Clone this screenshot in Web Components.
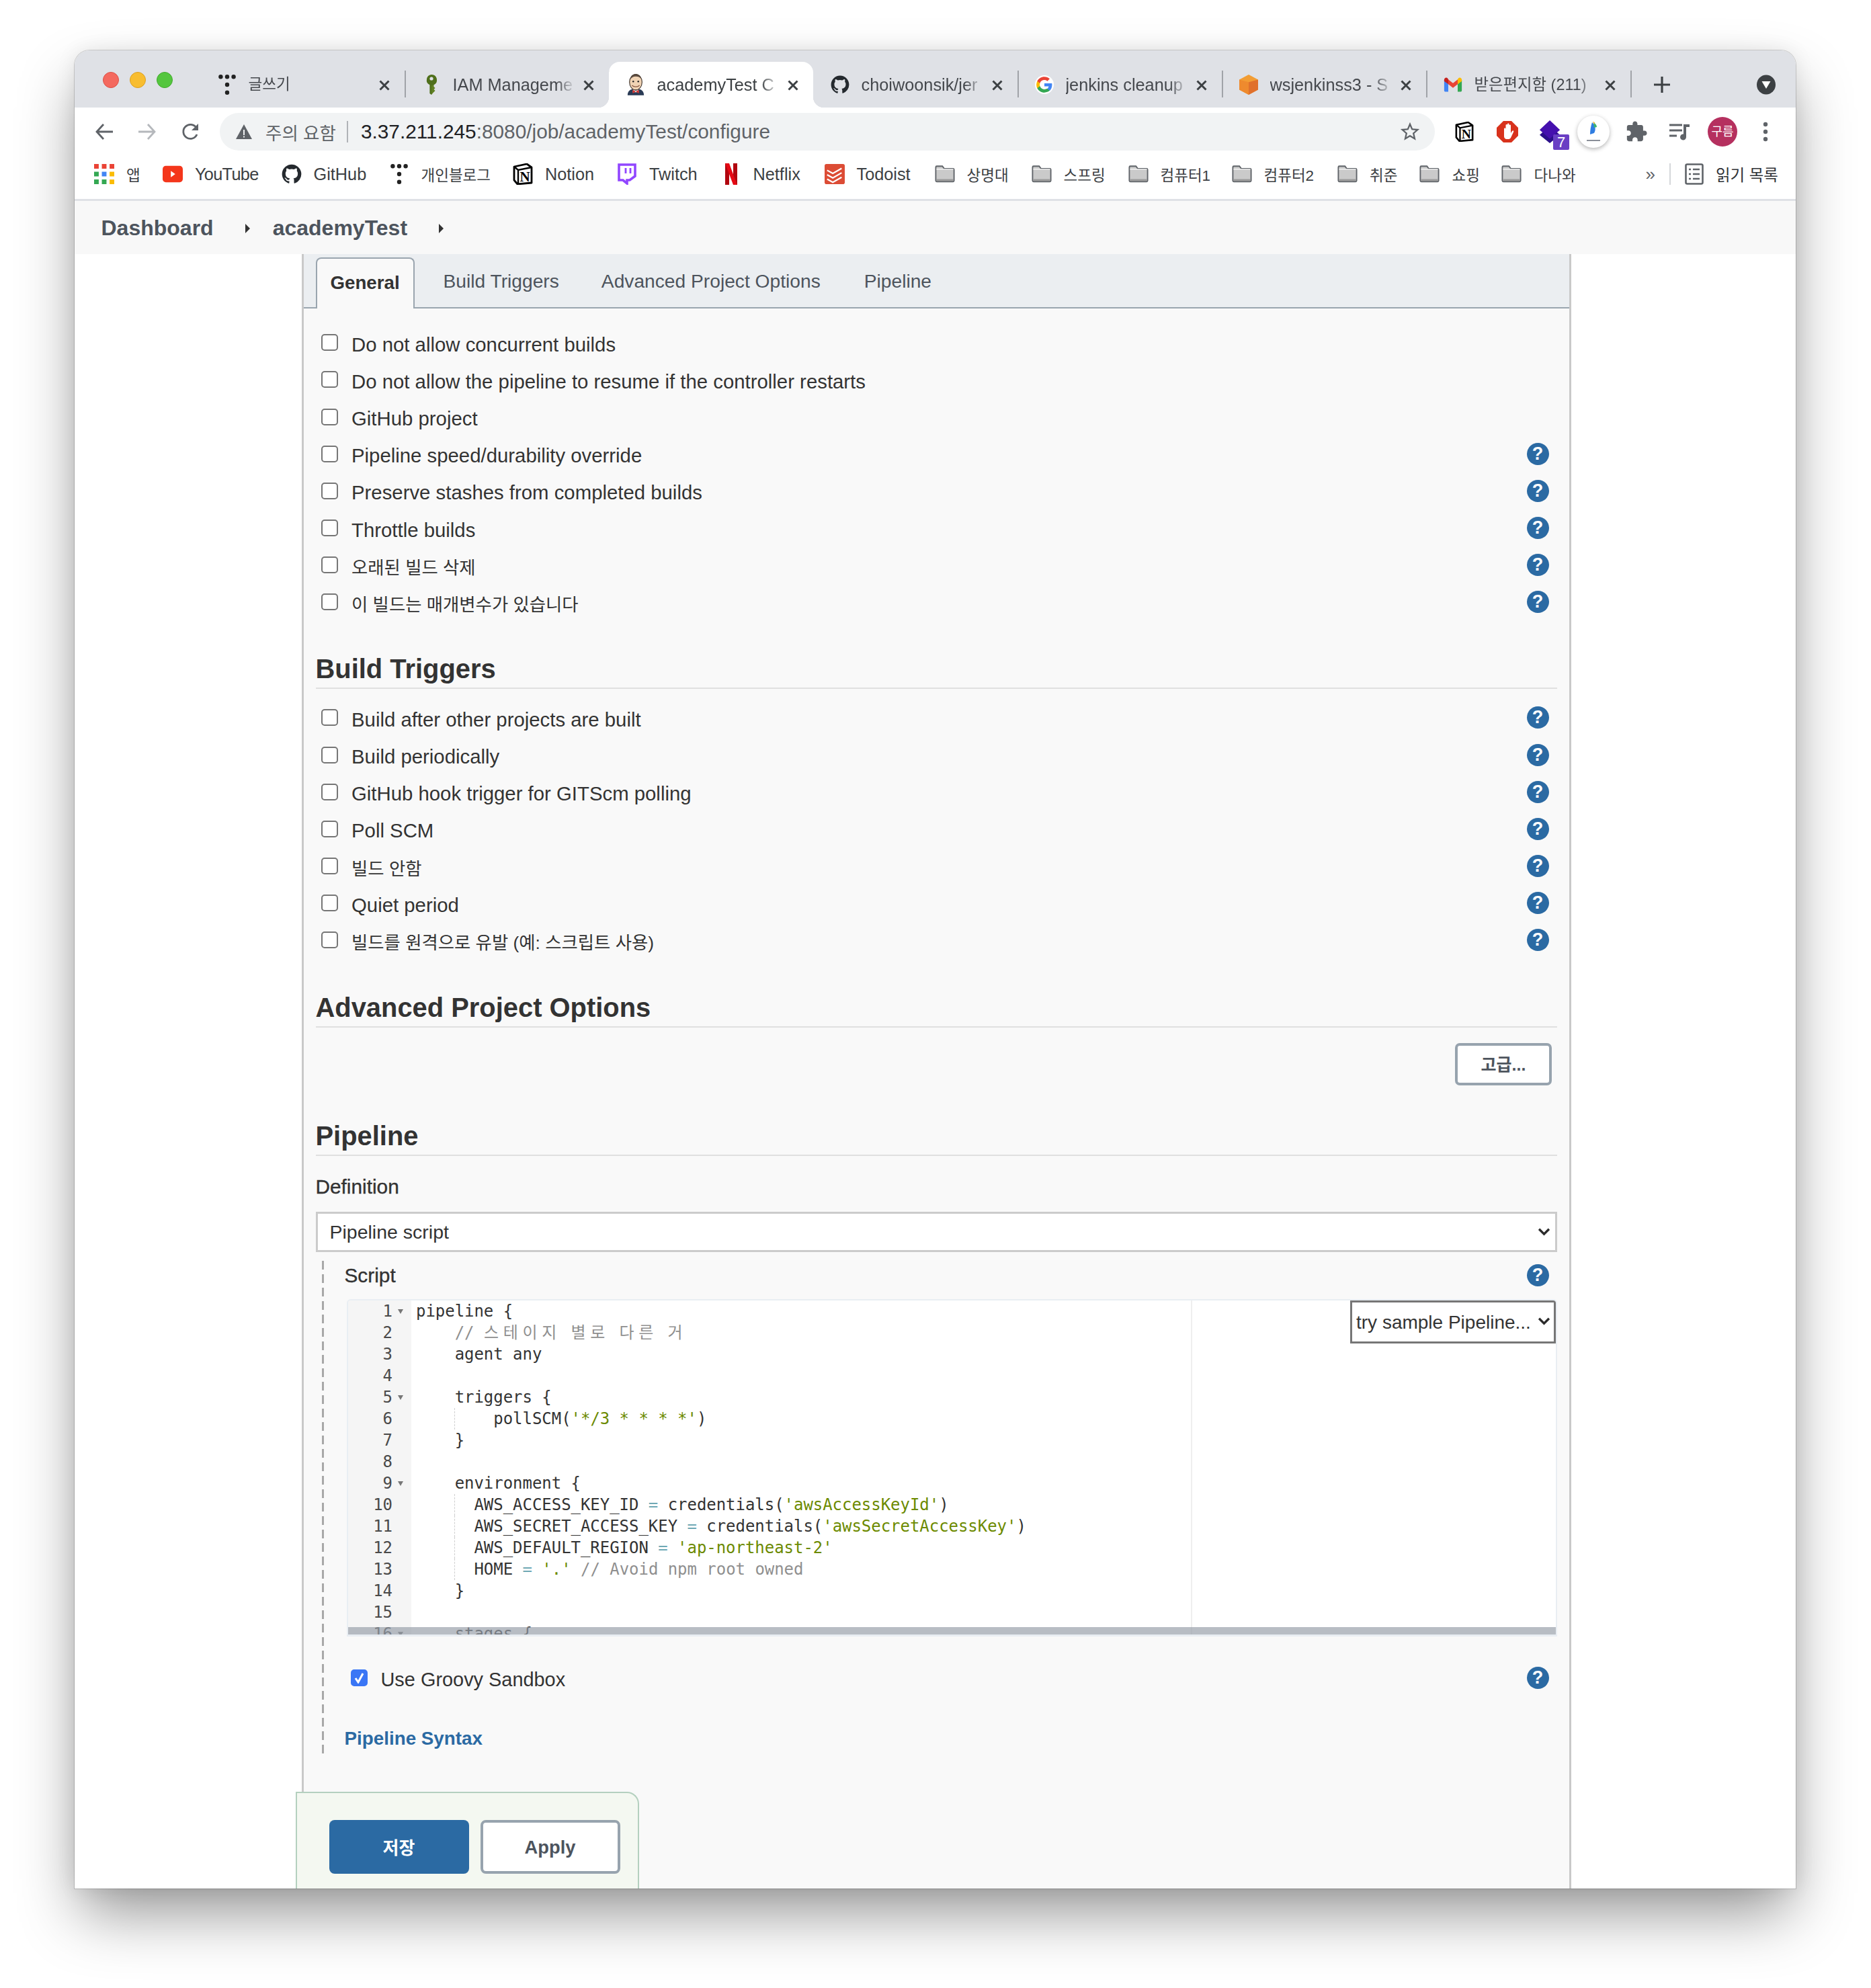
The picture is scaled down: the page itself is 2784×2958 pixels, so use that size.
<!DOCTYPE html>
<html lang="ko">
<head>
<meta charset="utf-8">
<title>academyTest Config</title>
<style>
  html, body { margin: 0; background: #fff; }
  body {
    padding: 75px 112px 148px 111px;
    font-family: "Liberation Sans", "Noto Sans CJK KR", sans-serif;
    color: #333;
  }
</style>
</head>
<body>
<app-window>
  <tab-strip slot="chrome">
    <chrome-tab icon="dots" style="font-size:22.5px">글쓰기</chrome-tab>
    <chrome-tab icon="key">IAM Manageme</chrome-tab>
    <chrome-tab icon="jenkins" active>academyTest C</chrome-tab>
    <chrome-tab icon="github">choiwoonsik/jer</chrome-tab>
    <chrome-tab icon="google">jenkins cleanup</chrome-tab>
    <chrome-tab icon="cube">wsjenkinss3 - S</chrome-tab>
    <chrome-tab icon="gmail" style="font-size:23.4px">받은편지함 (211)</chrome-tab>
  </tab-strip>
  <tool-bar slot="chrome"></tool-bar>
  <bookmark-bar slot="chrome">
    <bm-item icon="apps" w="102">앱</bm-item>
    <bm-item icon="youtube" w="176.5" style="letter-spacing:-.7px">YouTube</bm-item>
    <bm-item icon="github" w="160">GitHub</bm-item>
    <bm-item icon="dots" w="184.5">개인블로그</bm-item>
    <bm-item icon="notion" w="155">Notion</bm-item>
    <bm-item icon="twitch" w="154.5">Twitch</bm-item>
    <bm-item icon="netflix" w="154">Netflix</bm-item>
    <bm-item icon="todoist" w="164">Todoist</bm-item>
    <bm-item icon="folder" w="144">상명대</bm-item>
    <bm-item icon="folder" w="144">스프링</bm-item>
    <bm-item icon="folder" w="154">컴퓨터1</bm-item>
    <bm-item icon="folder" w="157.6">컴퓨터2</bm-item>
    <bm-item icon="folder" w="122.4">취준</bm-item>
    <bm-item icon="folder" w="122">쇼핑</bm-item>
    <bm-item icon="folder" w="110">다나와</bm-item>
  </bookmark-bar>
  <crumb-bar slot="chrome"></crumb-bar>

  <config-panel>
    <check-row>Do not allow concurrent builds</check-row>
    <check-row>Do not allow the pipeline to resume if the controller restarts</check-row>
    <check-row>GitHub project</check-row>
    <check-row help>Pipeline speed/durability override</check-row>
    <check-row help>Preserve stashes from completed builds</check-row>
    <check-row help>Throttle builds</check-row>
    <check-row help ko>오래된 빌드 삭제</check-row>
    <check-row help ko>이 빌드는 매개변수가 있습니다</check-row>

    <section-head style="margin-top:48.5px">Build Triggers</section-head>
    <check-row help style="margin-top:15.4px">Build after other projects are built</check-row>
    <check-row help>Build periodically</check-row>
    <check-row help>GitHub hook trigger for GITScm polling</check-row>
    <check-row help>Poll SCM</check-row>
    <check-row help ko>빌드 안함</check-row>
    <check-row help>Quiet period</check-row>
    <check-row help ko>빌드를 원격으로 유발 (예: 스크립트 사용)</check-row>

    <section-head style="margin-top:49.4px">Advanced Project Options</section-head>
    <plain-button style="margin:23px 8px 0 auto;width:144px;height:63px">고급...</plain-button>

    <section-head style="margin-top:52px">Pipeline</section-head>
    <field-label style="margin-top:29.5px">Definition</field-label>
    <wide-select style="margin-top:20px">Pipeline script</wide-select>

    <script-block>
      <code-editor></code-editor>
    </script-block>
    <save-bar></save-bar>
  </config-panel>
</app-window>

<script>
const ICONS = {
  dots: '<svg viewBox="0 0 26 30"><g fill="#222"><circle cx="4" cy="4" r="3"/><circle cx="13" cy="4" r="3"/><circle cx="22" cy="4" r="3"/><circle cx="13" cy="15" r="3"/><circle cx="13" cy="26" r="3"/></g></svg>',
  key: '<svg viewBox="0 0 20 32"><path fill="#5f7f22" d="M10 1a8 8 0 0 1 3.500 15.200V19l2 2-2 2 2 2-3 3-2.500 3-2.500-2V16.200A8 8 0 0 1 10 1z"/><path fill="#3f5f16" d="M10 1a8 8 0 0 1 0 16v14l-2.500-2V16.200A8 8 0 0 1 10 1z" opacity=".5"/><circle cx="10" cy="7" r="2.600" fill="#dfe1e6"/></svg>',
  jenkins: '<svg viewBox="0 0 30 34"><path fill="#2a3b55" d="M2 34c0-6 3-9 8-10l5 2 5-2c5 1 8 4 8 10z"/><path fill="#fff" d="M11 24l4 3 4-3 1 5H10z"/><ellipse cx="15" cy="13" rx="10" ry="12.500" fill="#f0d3b4" stroke="#3b3028" stroke-width="1.200"/><path fill="#5a4a3e" d="M6 9c1-6 5-9 9-9s8 3 9 8c-3-3-5-4-9-4s-7 2-9 5z"/><circle cx="11" cy="12" r="1.300" fill="#222"/><circle cx="19" cy="12" r="1.300" fill="#222"/><path fill="none" stroke="#8a5a44" stroke-width="1.400" d="M9 18c3 3 9 3 12 0"/><path fill="#d0312d" d="M10 25l5 3 5-3v6l-5-3-5 3z"/></svg>',
  github: '<svg viewBox="0 0 24 24"><path fill="#24292e" d="M12 .5C5.650.5.5 5.650.5 12c0 5.080 3.290 9.390 7.860 10.910.570.100.780-.250.780-.550v-2.140c-3.200.700-3.870-1.360-3.870-1.360-.520-1.330-1.270-1.680-1.270-1.680-1.040-.710.080-.700.080-.700 1.150.080 1.760 1.180 1.760 1.180 1.020 1.750 2.680 1.250 3.330.950.100-.740.400-1.250.730-1.540-2.550-.290-5.240-1.280-5.240-5.690 0-1.260.450-2.280 1.180-3.090-.120-.290-.510-1.460.110-3.050 0 0 .960-.310 3.150 1.180a10.900 10.900 0 0 1 5.740 0c2.190-1.490 3.150-1.180 3.150-1.180.620 1.590.230 2.760.110 3.050.740.810 1.180 1.830 1.180 3.090 0 4.420-2.690 5.390-5.250 5.680.410.360.780 1.060.780 2.140v3.170c0 .310.210.660.790.550A11.500 11.500 0 0 0 23.500 12C23.500 5.650 18.350.5 12 .5z"/></svg>',
  google: '<svg viewBox="4 4 24 24"><circle cx="16" cy="16" r="12" fill="#fff"/><path fill="#4285f4" d="M25.800 16.300c0-.700-.100-1.400-.200-2H16v3.900h5.500c-.200 1.300-1 2.400-2 3.100v2.500h3.300c1.900-1.800 3-4.400 3-7.500z"/><path fill="#34a853" d="M16 26c2.700 0 5-.900 6.800-2.400l-3.300-2.600c-.900.600-2.100 1-3.500 1-2.700 0-4.900-1.800-5.700-4.200H6.900v2.600C8.600 23.800 12 26 16 26z"/><path fill="#fbbc05" d="M10.300 17.800c-.400-1.200-.400-2.500 0-3.700v-2.600H6.900a10 10 0 0 0 0 8.900z"/><path fill="#ea4335" d="M16 10c1.500 0 2.800.500 3.900 1.500l2.900-2.900C21 7 18.700 6 16 6c-4 0-7.400 2.200-9.100 5.500l3.400 2.600c.800-2.400 3-4.100 5.700-4.100z"/></svg>',
  cube: '<svg viewBox="0 0 30 32"><path fill="#f29d34" d="M15 0l15 8v16l-15 8L0 24V8z"/><path fill="#e0702c" d="M15 12l15-4v16l-15 8z"/><path fill="#ee8a2e" d="M15 12L0 8v16l15 8z"/></svg>',
  gmail: '<svg viewBox="0 0 32 26"><path fill="#4285f4" d="M1 5v18c0 1 .800 2 2 2h5V12z"/><path fill="#34a853" d="M31 5v18c0 1-.800 2-2 2h-5V12z"/><path fill="#ea4335" d="M8 12V4l8 6.500L24 4v8l-8 6.500z"/><path fill="#c5221f" d="M1 5c0-3.500 3.500-5 6-3l1 2v8L1 7z"/><path fill="#fbbc04" d="M31 5c0-3.500-3.500-5-6-3l-1 2v8l7-5z"/></svg>',
  apps: '<svg viewBox="0 0 26 26"><path fill="#ea4335" d="M0 0h6v6H0zM10 0h6v6h-6zM20 0h6v6h-6z"/><path fill="#34a853" d="M0 10h6v6H0z"/><path fill="#4285f4" d="M10 10h6v6h-6z"/><path fill="#fbbc05" d="M20 10h6v6h-6z"/><path fill="#34a853" d="M0 20h6v6H0zM10 20h6v6h-6z"/><path fill="#fbbc05" d="M20 20h6v6h-6z"/></svg>',
  youtube: '<svg viewBox="0 0 32 26"><rect width="32" height="26" y="0" rx="5" fill="#f4361b"/><path fill="#fff" d="M13 8l7 5-7 5z"/></svg>',
  notion: '<svg viewBox="0 0 30 32"><path fill="#fff" stroke="#000" stroke-width="2.800" stroke-linejoin="round" d="M2 5l19-4 7 5v23l-21 2-5-6z"/><path fill="none" stroke="#000" stroke-width="2.400" d="M2 5l6 5 20-4M8 10v21"/><text x="18" y="27" font-family="Liberation Serif" font-weight="700" font-size="21" text-anchor="middle" fill="#000">N</text></svg>',
  twitch: '<svg viewBox="0 0 28 32"><path fill="#fff" stroke="#9146ff" stroke-width="3.600" d="M2 2h24v17l-8 6h-4v5l-6-5H2z"/><path stroke="#9146ff" stroke-width="2.800" d="M12 7v8M19 7v8"/></svg>',
  netflix: '<svg viewBox="0 0 20 32"><path fill="#b1060f" d="M1 0h6v32l-6 .500zM13 0h6v32.500l-6-.500z"/><path fill="#e50914" d="M1 0h6l12 32.500-6-.500z"/></svg>',
  todoist: '<svg viewBox="0 0 32 32"><rect width="32" height="32" rx="3" fill="#dc4c35"/><path fill="none" stroke="#fff" stroke-width="2.400" d="M4 10l9 5 14-8M4 17l9 5 14-8M4 24l9 5 14-8"/></svg>',
  folder: '<svg viewBox="0 0 32 28"><path fill="#cacaca" stroke="#5f6368" stroke-width="2" d="M1.500 3c0-1 .500-1.500 1.500-1.500h9l3 4h14c1 0 1.500.500 1.500 1.500v17.500c0 1-.500 1.500-1.500 1.500H3c-1 0-1.500-.500-1.500-1.500z"/><path fill="#fff" d="M2.500 5.500h27v1.500h-27z" opacity=".8"/><path fill="#9b9b9b" d="M2.500 22h27v3h-27z"/></svg>',
  list: '<svg viewBox="0 0 28 32"><rect x="1.500" y="1.500" width="25" height="29" rx="2" fill="none" stroke="#5f6368" stroke-width="2.600"/><path stroke="#5f6368" stroke-width="2.600" d="M6 9h3M12 9h10M6 16h3M12 16h10M6 23h3M12 23h10"/></svg>',
  back: '<svg viewBox="0 0 28 28"><path fill="none" stroke="#5f6368" stroke-width="2.800" d="M27 14H3M13 3L3 14l10 11"/></svg>',
  forward: '<svg viewBox="0 0 28 28"><path fill="none" stroke="#b5b8bc" stroke-width="2.800" d="M1 14h24M15 3l10 11-10 11"/></svg>',
  reload: '<svg viewBox="0 0 28 28"><path fill="none" stroke="#5f6368" stroke-width="2.800" d="M23 18a10.500 10.500 0 1 1-1-10"/><path fill="#5f6368" d="M25 2v10h-10z"/></svg>',
  warn: '<svg viewBox="0 0 26 26"><path fill="#5f6368" d="M13 2l12 22H1z"/><path fill="#f1f3f4" d="M12 10h2v8h-2zM12 19.500h2v2h-2z"/></svg>',
  star: '<svg viewBox="0 0 24 24"><path fill="#5f6368" d="M22 9.240l-7.190-.620L12 2 9.190 8.630 2 9.240l5.460 4.730L5.820 21 12 17.270 18.180 21l-1.630-7.030L22 9.240zM12 15.400l-3.760 2.270 1-4.280-3.320-2.880 4.380-.380L12 6.100l1.710 4.040 4.380.380-3.320 2.880 1 4.280L12 15.400z"/></svg>',
  adblock: '<svg viewBox="0 0 32 32"><path fill="#d8321c" d="M10 0h12l10 10v12L22 32H10L0 22V10z"/><path fill="#fff" d="M11 12c0-2 2.500-2 2.500 0V6.500c0-2 2.500-2 2.500 0V5c0-2 2.500-2 2.500 0v2c0-2 2.500-2 2.500 0v11l2-3c1.500-2 3 0 2 1.500L21 25c-1 1.500-2 2-4 2h-2c-2.500 0-4-2-4-4z"/></svg>',
  diamond: '<svg viewBox="0 0 36 36"><path fill="#2b0f8a" d="M17 9L33 23 17 36 1 23z"/><path fill="#4510ae" d="M17 0l16 15-16 14L1 15z"/></svg>',
  feather: '<svg viewBox="0 0 48 48"><circle cx="24" cy="24" r="23" fill="#fff"/><path fill="#2f7de1" d="M22 10c-2 6-3 12-3 18l6-2c3-5 2-12-3-16z"/><path fill="#3bb273" d="M24 10c3 2 5 4 5 7l-4 1z"/><path fill="#f3b32a" d="M23 9l3 1-1 3z"/><path fill="#8a8f98" d="M14 36h20v2H14z"/></svg>',
  puzzle: '<svg viewBox="0 0 24 24"><path fill="#5f6368" d="M20.500 11H19V7c0-1.100-.900-2-2-2h-4V3.500C13 2.120 11.880 1 10.500 1S8 2.120 8 3.500V5H4c-1.100 0-1.990.900-1.990 2v3.800H3.500c1.490 0 2.700 1.210 2.700 2.700s-1.210 2.700-2.700 2.700H2V20c0 1.100.900 2 2 2h3.800v-1.500c0-1.490 1.210-2.700 2.700-2.700 1.490 0 2.700 1.210 2.700 2.700V22H17c1.100 0 2-.900 2-2v-4h1.500c1.380 0 2.500-1.120 2.500-2.500S21.880 11 20.500 11z"/></svg>',
  media: '<svg viewBox="0 0 32 28"><path stroke="#5f6368" stroke-width="3" d="M1 4h19M1 12h19M1 20h11"/><path fill="#5f6368" d="M22 3h9v4h-5v15a4.500 4.500 0 1 1-4-4.500z"/></svg>',
  kebab: '<svg viewBox="0 0 8 30"><g fill="#5f6368"><circle cx="4" cy="4" r="3.200"/><circle cx="4" cy="15" r="3.200"/><circle cx="4" cy="26" r="3.200"/></g></svg>',
  plus: '<svg viewBox="0 0 26 26"><path stroke="#3c4043" stroke-width="3.200" d="M13 1v24M1 13h24"/></svg>',
  down: '<svg viewBox="0 0 28 30"><ellipse cx="14" cy="15" rx="14" ry="14.500" fill="#3c4043"/><path fill="#fff" d="M7.500 10h13L14 21z"/></svg>',
  close: '<svg viewBox="0 0 18 18"><path stroke="#3c4043" stroke-width="3" d="M2.500 2.500l13 13M15.500 2.500l-13 13"/></svg>',
  chevron: '<svg viewBox="0 0 20 14"><path fill="none" stroke="#2b2b2b" stroke-width="3.600" d="M2 3l8 8 8-8"/></svg>'
};

class UiIcon extends HTMLElement {
  connectedCallback() {
    this.attachShadow({ mode: "open" });
    const w = this.getAttribute("w") || 28;
    const h = this.getAttribute("h") || 28;
    this.shadowRoot.innerHTML = `
      <style>
        :host { display: inline-flex; flex: none; align-items: center; justify-content: center; width: ${w}px; height: ${h}px; }
        svg { width: 100%; height: 100%; display: block; }
      </style>
      ${ICONS[this.getAttribute("name")] || ""}`;
  }
}
customElements.define("ui-icon", UiIcon);

class AppWindow extends HTMLElement {
  constructor() {
    super();
    this.attachShadow({ mode: "open" });
    this.shadowRoot.innerHTML = `
      <style>
        :host {
          display: flex; flex-direction: column; height: 2735px; overflow: hidden;
          background: #fff; border-radius: 22px 22px 0 0;
          box-shadow: 0 44px 90px -8px rgba(0,0,0,.42), 0 0 0 1px rgba(0,0,0,.16), 0 0 30px rgba(0,0,0,.08);
        }
      </style>
      <slot name="chrome"></slot>
      <slot></slot>`;
  }
}
customElements.define("app-window", AppWindow);

class TabStrip extends HTMLElement {
  constructor() {
    super();
    this.attachShadow({ mode: "open" });
    this.shadowRoot.innerHTML = `
      <style>
        :host { display: flex; flex: none; height: 85px; box-sizing: border-box; background: #dfe1e6; padding: 17px 0 0 0; }
        .lights { display: flex; gap: 16px; width: 187px; box-sizing: border-box; padding: 15px 0 0 42px; }
        .lights i { width: 24px; height: 24px; border-radius: 50%; box-sizing: border-box; }
        .plus { margin: 21px 0 0 34px; }
        .down { margin: 19px 30px 0 auto; }
      </style>
      <div class="lights">
        <i style="background:#f4695f;border:1px solid #dd5047"></i>
        <i style="background:#f8bd30;border:1px solid #dc9f20"></i>
        <i style="background:#54c63e;border:1px solid #42a92d"></i>
      </div>
      <slot></slot>
      <ui-icon class="plus" name="plus" w="26" h="26"></ui-icon>
      <ui-icon class="down" name="down" w="28" h="30"></ui-icon>`;
  }
}
customElements.define("tab-strip", TabStrip);

class ChromeTab extends HTMLElement {
  constructor() {
    super();
    this.attachShadow({ mode: "open" });
  }
  connectedCallback() {
    const icon = this.getAttribute("icon");
    this.shadowRoot.innerHTML = `
      <style>
        :host {
          display: flex; flex: none; align-items: center; position: relative;
          width: 304px; height: 68px; box-sizing: border-box; padding-left: 26px;
          font-size: 25.3px; color: #45484d;
        }
        :host([active]) { background: #fff; border-radius: 16px 16px 0 0; color: #3c4043; }
        :host([active]) .sep { visibility: hidden; }
        :host([active])::before, :host([active])::after {
          content: ""; position: absolute; bottom: 0; width: 16px; height: 16px;
        }
        :host([active])::before { left: -16px; background: radial-gradient(circle at 0 0, transparent 16px, #fff 16.5px); }
        :host([active])::after { right: -16px; background: radial-gradient(circle at 100% 0, transparent 16px, #fff 16.5px); }
        .title {
          width: 188px; margin-left: 17.5px; white-space: nowrap; overflow: hidden; line-height: 34px;
          -webkit-mask-image: linear-gradient(90deg, #000 calc(100% - 34px), transparent calc(100% - 6px));
        }
        .x { margin: 2px 5px 0 5px; }
        .sep { width: 2px; height: 40px; background: #a0a3a8; margin: -2px -2px 0 auto; }
      </style>
      <ui-icon name="${icon}" w="28" h="32"></ui-icon>
      <span class="title"><slot></slot></span>
      <ui-icon class="x" name="close" w="18" h="18"></ui-icon>
      <span class="sep"></span>`;
  }
}
customElements.define("chrome-tab", ChromeTab);

class ToolBar extends HTMLElement {
  constructor() {
    super();
    this.attachShadow({ mode: "open" });
    this.shadowRoot.innerHTML = `
      <style>
        :host { display: flex; flex: none; align-items: center; height: 68px; box-sizing: border-box; padding: 8px 0 0 11.5px; background: #fff; }
        .btn { display: flex; align-items: center; justify-content: center; width: 64.5px; flex: none; }
        .addr {
          display: flex; align-items: center; flex: none; width: 1808px; height: 56px; margin-left: 11px; margin-bottom: 4px;
          box-sizing: border-box; padding: 0 20px 0 23px; border-radius: 28px; background: #f1f3f4;
        }
        .warn-text { margin-left: 19px; font-size: 26.5px; color: #5f6368; white-space: nowrap; }
        .bar { width: 2px; height: 32px; background: #b0b3b7; margin: 0 19px 0 16px; }
        .url { font-size: 29.8px; color: #5f6368; white-space: nowrap; }
        .url b { font-weight: 400; color: #202124; }
        .star { margin-left: auto; }
        .exts { display: flex; margin-left: 12px; margin-bottom: 4px; }
        .exts .btn { width: 64px; position: relative; height: 56px; }
        .badge {
          position: absolute; left: 36px; top: 32px; width: 24px; height: 23px; border-radius: 2px;
          background: #6a3fc4; color: #fff; font-size: 22px; line-height: 24px; text-align: center;
        }
        .feather { border-radius: 50%; box-shadow: 0 2px 6px rgba(0,0,0,.3); }
        .avatar {
          width: 44px; height: 44px; border-radius: 50%; background: #b5305f; color: #fff;
          font-size: 18px; line-height: 44px; text-align: center;
        }
      </style>
      <span class="btn" style="margin-bottom:4px"><ui-icon name="back" w="28" h="28"></ui-icon></span>
      <span class="btn" style="margin-bottom:4px"><ui-icon name="forward" w="28" h="28"></ui-icon></span>
      <span class="btn" style="margin-bottom:4px"><ui-icon name="reload" w="28" h="28"></ui-icon></span>
      <div class="addr">
        <ui-icon name="warn" w="26" h="28"></ui-icon>
        <span class="warn-text">주의 요함</span>
        <span class="bar"></span>
        <span class="url"><b>3.37.211.245</b>:8080/job/academyTest/configure</span>
        <ui-icon class="star" name="star" w="34" h="34"></ui-icon>
      </div>
      <div class="exts">
        <span class="btn"><ui-icon name="notion" w="28" h="30"></ui-icon></span>
        <span class="btn"><ui-icon name="adblock" w="32" h="32"></ui-icon></span>
        <span class="btn"><ui-icon name="diamond" w="34" h="34"></ui-icon><span class="badge">7</span></span>
        <span class="btn"><ui-icon class="feather" name="feather" w="48" h="48"></ui-icon></span>
        <span class="btn"><ui-icon name="puzzle" w="34" h="34"></ui-icon></span>
        <span class="btn"><ui-icon name="media" w="32" h="28"></ui-icon></span>
        <span class="btn"><span class="avatar">구름</span></span>
        <span class="btn"><ui-icon name="kebab" w="8" h="30"></ui-icon></span>
      </div>`;
  }
}
customElements.define("tool-bar", ToolBar);

class BookmarkBar extends HTMLElement {
  constructor() {
    super();
    this.attachShadow({ mode: "open" });
    this.shadowRoot.innerHTML = `
      <style>
        :host {
          display: flex; flex: none; align-items: center; height: 71px; box-sizing: border-box;
          padding: 0 26px 6px 29px; background: #fff; border-bottom: 3px solid #dfe1e6;
          font-size: 25.3px; color: #3c4043;
        }
        .more { margin-left: auto; font-size: 26px; color: #5f6368; }
        .sep { width: 2px; height: 32px; background: #d5d7da; margin: 0 21px 0 21px; }
        .read { margin-left: 18px; font-size: 23.5px; color: #2f3236; white-space: nowrap; }
      </style>
      <slot></slot>
      <span class="more">»</span>
      <span class="sep"></span>
      <ui-icon name="list" w="28" h="32"></ui-icon>
      <span class="read">읽기 목록</span>`;
  }
}
customElements.define("bookmark-bar", BookmarkBar);

class BmItem extends HTMLElement {
  constructor() {
    super();
    this.attachShadow({ mode: "open" });
  }
  connectedCallback() {
    this.shadowRoot.innerHTML = `
      <style>
        :host { display: flex; flex: none; align-items: center; width: ${this.getAttribute("w")}px; white-space: nowrap; }
        .t { margin-left: 18px; }
        .k { font-size: 22.5px; }
      </style>
      <ui-icon name="${this.getAttribute("icon")}" w="30" h="32"></ui-icon>
      <span class="t ${/[가-힣]/.test(this.textContent) ? "k" : ""}"><slot></slot></span>`;
  }
}
customElements.define("bm-item", BmItem);

class CrumbBar extends HTMLElement {
  constructor() {
    super();
    this.attachShadow({ mode: "open" });
    this.shadowRoot.innerHTML = `
      <style>
        :host {
          display: flex; flex: none; align-items: center; height: 79px; box-sizing: border-box; padding: 2px 0 0 39.5px;
          background: #f8f8f8; font-size: 32px; font-weight: 700; color: #4d545d;
        }
        i { width: 0; height: 0; border-left: 7px solid #333; border-top: 7px solid transparent; border-bottom: 7px solid transparent; }
      </style>
      <span>Dashboard</span>
      <i style="margin:0 34px 0 47px"></i>
      <span>academyTest</span>
      <i style="margin-left:47px"></i>`;
  }
}
customElements.define("crumb-bar", CrumbBar);

class ConfigPanel extends HTMLElement {
  constructor() {
    super();
    this.attachShadow({ mode: "open" });
    this.shadowRoot.innerHTML = `
      <style>
        :host { display: block; flex: 1; min-height: 0; margin: 0 334px 0 337.5px; background: #f9f9f9; border: solid #c9c9c9; border-width: 0 3px; }
        .tabs {
          display: flex; align-items: flex-end; height: 81px; box-sizing: border-box; padding-left: 18px;
          background: #ebeef1; border-bottom: 2px solid #9aa5af; font-size: 28.2px; color: #4d545d;
        }
        .tabs span { padding-bottom: 22px; white-space: nowrap; }
        .tabs .on {
          width: 147px; height: 76px; margin-bottom: -2px; box-sizing: border-box; padding: 20px 0 0 20px;
          background: #f9f9f9; border: 2px solid #9aa5af; border-bottom: 0; border-radius: 8px 8px 0 0;
          font-weight: 700; color: #333; font-size: 27.7px;
        }
        .body { display: flex; flex-direction: column; padding: 23.2px 18px 0 18px; }
      </style>
      <div class="tabs">
        <span class="on">General</span>
        <span style="margin-left:43px">Build Triggers</span>
        <span style="margin-left:63px">Advanced Project Options</span>
        <span style="margin-left:65px">Pipeline</span>
      </div>
      <div class="body"><slot></slot></div>`;
  }
}
customElements.define("config-panel", ConfigPanel);

class HelpIcon extends HTMLElement {
  constructor() {
    super();
    this.attachShadow({ mode: "open" });
    this.shadowRoot.innerHTML = `
      <style>
        :host {
          display: block; flex: none; width: 33px; height: 33px; border-radius: 50%; background: #2b6aa3;
          color: #fff; font: 700 27px/33px "Liberation Sans", sans-serif; text-align: center;
        }
      </style>?`;
  }
}
customElements.define("help-icon", HelpIcon);

class CheckRow extends HTMLElement {
  constructor() {
    super();
    this.attachShadow({ mode: "open" });
  }
  connectedCallback() {
    const on = this.hasAttribute("checked");
    this.shadowRoot.innerHTML = `
      <style>
        :host { display: flex; flex: none; align-items: center; height: 55.17px; padding: 0 12.5px 0 8.5px; font-size: 29.35px; color: #333; }
        :host([ko]) .label { font-size: 26.4px; padding-top: 4px; }
        :host([checked]) .box { background: #3a76f5; border-color: #3a76f5; }
        .box {
          position: relative; appearance: none; flex: none; width: 25px; height: 25px; margin: 0; box-sizing: border-box;
          background: #fff; border: 2px solid #767676; border-radius: 5px;
        }
        .wrap { position: relative; display: flex; flex: none; }
        .tick { position: absolute; left: 4px; top: 4px; width: 17px; height: 17px; }
        .label { margin-left: 20px; padding-top: 6px; white-space: nowrap; }
        help-icon { margin-left: auto; }
      </style>
      <span class="wrap">
        <input class="box" type="checkbox" ${on ? "checked" : ""}>
        ${on ? '<svg class="tick" viewBox="0 0 17 17"><path fill="none" stroke="#fff" stroke-width="3" d="M3 9l4 6 7-13"/></svg>' : ""}
      </span>
      <span class="label"><slot></slot></span>
      ${this.hasAttribute("help") ? "<help-icon></help-icon>" : ""}`;
  }
}
customElements.define("check-row", CheckRow);

class SectionHead extends HTMLElement {
  constructor() {
    super();
    this.attachShadow({ mode: "open" });
    this.shadowRoot.innerHTML = `
      <style>
        :host {
          display: block; flex: none; font-size: 39.9px; font-weight: 700; line-height: 46px; color: #333;
          padding-bottom: 5px; border-bottom: 2px solid #e0e0e0;
        }
      </style>
      <slot></slot>`;
  }
}
customElements.define("section-head", SectionHead);

class FieldLabel extends HTMLElement {
  constructor() {
    super();
    this.attachShadow({ mode: "open" });
    this.shadowRoot.innerHTML = `
      <style>
        :host { display: block; flex: none; font-size: 29.8px; line-height: 34px; color: #333; -webkit-text-stroke: .35px #333; }
      </style>
      <slot></slot>`;
  }
}
customElements.define("field-label", FieldLabel);

class PlainButton extends HTMLElement {
  constructor() {
    super();
    this.attachShadow({ mode: "open" });
    this.shadowRoot.innerHTML = `
      <style>
        :host {
          display: flex; flex: none; align-items: center; justify-content: center; box-sizing: border-box; padding-bottom: 3px;
          background: #fff; border: 4px solid #97a3ae; border-radius: 7px;
          font-size: 25px; font-weight: 700; color: #4d545d;
        }
      </style>
      <slot></slot>`;
  }
}
customElements.define("plain-button", PlainButton);

class WideSelect extends HTMLElement {
  constructor() {
    super();
    this.attachShadow({ mode: "open" });
    const value = this.textContent.trim();
    this.shadowRoot.innerHTML = `
      <style>
        :host { display: block; flex: none; position: relative; height: 60px; }
        select {
          appearance: none; display: block; width: 100%; height: 100%; box-sizing: border-box; margin: 0; border-radius: 0;
          padding: 0 0 0 18px; background: #fff; border: 3px solid #cbcbcb;
          font: 28.5px "Liberation Sans", sans-serif; color: #333;
        }
        ui-icon { position: absolute; right: 10px; top: 23px; }
      </style>
      <select><option>${value}</option></select>
      <ui-icon name="chevron" w="19" h="13"></ui-icon>`;
  }
}
customElements.define("wide-select", WideSelect);

class ScriptBlock extends HTMLElement {
  constructor() {
    super();
    this.attachShadow({ mode: "open" });
    this.shadowRoot.innerHTML = `
      <style>
        :host {
          display: block; flex: none; margin: 13px 0 0 9px; padding: 5px 0 2px 34px;
          background: repeating-linear-gradient(#a8a8a8 0 13px, transparent 13px 20px) left top / 3px 100% no-repeat;
        }
        .head { display: flex; align-items: center; justify-content: space-between; padding-right: 12.5px; height: 34px; }
        .head help-icon { margin-top: -2px; }
        .head span { font-size: 29.8px; color: #333; -webkit-text-stroke: .35px #333; }
        .slotted { margin: 18px 0 0 3.5px; }
        .link { margin-top: 46px; font-size: 27.8px; line-height: 40px; font-weight: 700; color: #2b6aa3; }
        check-row { margin: 36px 0 0 0; height: 50px; padding-left: 9px; font-size: 28.9px; }
      </style>
      <div class="head"><span>Script</span><help-icon></help-icon></div>
      <div class="slotted"><slot></slot></div>
      <check-row checked help>Use Groovy Sandbox</check-row>
      <div class="link">Pipeline Syntax</div>`;
  }
}
customElements.define("script-block", ScriptBlock);

const CODE = [
  [1, "pipeline {"],
  [0, "    <span class=c>// <span class=k>스테이지</span> <span class=k>별로</span> <span class=k>다른</span> <span class=k>거</span></span>"],
  [0, "    agent any"],
  [0, ""],
  [1, "    triggers {"],
  [2, "        pollSCM(<span class=s>'*/3 * * * *'</span>)"],
  [0, "    }"],
  [0, ""],
  [1, "    environment {"],
  [2, "      AWS_ACCESS_KEY_ID <span class=o>=</span> credentials(<span class=s>'awsAccessKeyId'</span>)"],
  [2, "      AWS_SECRET_ACCESS_KEY <span class=o>=</span> credentials(<span class=s>'awsSecretAccessKey'</span>)"],
  [2, "      AWS_DEFAULT_REGION <span class=o>=</span> <span class=s>'ap-northeast-2'</span>"],
  [2, "      HOME <span class=o>=</span> <span class=s>'.'</span> <span class=c>// Avoid npm root owned</span>"],
  [0, "    }"],
  [0, ""],
  [1, "    stages {"]
];

class CodeEditor extends HTMLElement {
  constructor() {
    super();
    this.attachShadow({ mode: "open" });
    const rows = CODE.map(([kind, html], i) => `
      <div class="row">
        <span class="num">${i + 1}${kind === 1 ? '<i class="fold"></i>' : ""}</span>
        <span class="code${kind === 2 ? " guide" : ""}">${html}</span>
      </div>`).join("");
    this.shadowRoot.innerHTML = `
      <style>
        :host {
          display: block; position: relative; height: 502px; box-sizing: border-box; overflow: hidden;
          background: #fff; border: 2px solid #e9eef3; border-bottom-width: 3px; border-radius: 6px 6px 0 0;
          font: 24px/32px "DejaVu Sans Mono", "Noto Sans CJK KR", monospace; color: #333;
        }
        .rows { background: linear-gradient(90deg, #f5f5f5 94px, #fff 94px); height: 100%; }
        .row { display: flex; height: 32px; white-space: pre; letter-spacing: -.04px; }
        .num { position: relative; flex: none; width: 66px; padding-right: 28px; text-align: right; color: #4a4a4a; }
        .fold { position: absolute; left: 74px; top: 13px; border-top: 7px solid #777; border-left: 4px solid transparent; border-right: 4px solid transparent; }
        .code { position: relative; padding-left: 7px; }
        .guide::before { content: ""; position: absolute; left: 64px; top: 0; bottom: 0; border-left: 1px dashed #cfcfcf; }
        .c { color: #8f8f8f; }
        .s { color: #6c8a00; }
        .o { color: #6fa8b4; }
        .k { letter-spacing: 6.7px; }
        .margin { position: absolute; left: 1254px; top: 0; bottom: 0; width: 2px; background: #efefef; }
        .scroll { position: absolute; left: 0; right: 0; bottom: 0; height: 11px; background: rgba(150,157,168,.68); }
        select {
          position: absolute; right: 0; top: 0; width: 306px; height: 64px; margin: 0; box-sizing: border-box; appearance: none;
          background: #fff; border: 3px solid #767676; border-radius: 0; padding: 0 0 0 6px;
          font: 28px "Liberation Sans", sans-serif; color: #333;
        }
        ui-icon { position: absolute; right: 8px; top: 24px; }
      </style>
      <div class="rows">${rows}</div>
      <div class="margin"></div>
      <div class="scroll"></div>
      <select><option>try sample Pipeline...</option></select>
      <ui-icon name="chevron" w="19" h="13"></ui-icon>`;
  }
}
customElements.define("code-editor", CodeEditor);

class SaveBar extends HTMLElement {
  constructor() {
    super();
    this.attachShadow({ mode: "open" });
    this.shadowRoot.innerHTML = `
      <style>
        :host {
          display: flex; flex: none; gap: 17px; align-items: flex-start; width: 511px; height: 160px; box-sizing: border-box;
          margin: 56.5px 0 0 -30px; padding: 40px 0 0 48px;
          background: #f4f8f1; border: 2px solid #b4d0bf; border-bottom: 0; border-radius: 0 18px 0 0;
        }
        button {
          width: 208px; height: 80px; margin: 0; box-sizing: border-box; border-radius: 8px; padding: 0;
          font: 700 27.3px "Liberation Sans", "Noto Sans CJK KR", sans-serif;
        }
        .save { background: #2b6aa3; border: 0; color: #fff; font-size: 26px; }
        .apply { background: #fff; border: 4px solid #97a3ae; color: #4d545d; padding-top: 2px; }
      </style>
      <button class="save">저장</button>
      <button class="apply">Apply</button>`;
  }
}
customElements.define("save-bar", SaveBar);
</script>
</body>
</html>
